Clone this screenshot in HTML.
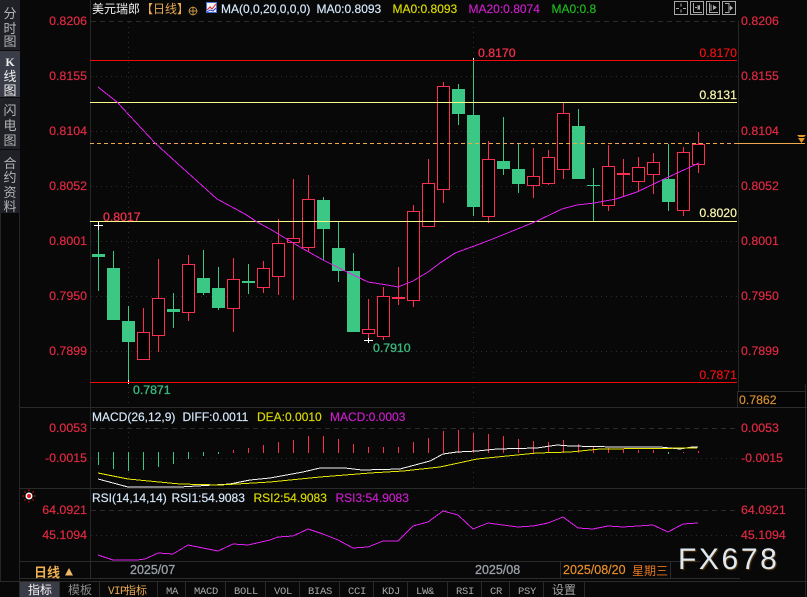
<!DOCTYPE html>
<html><head><meta charset="utf-8"><style>
html,body{margin:0;padding:0;background:#080808;width:807px;height:597px;overflow:hidden}
svg{position:absolute;left:0;top:0}
text{font-family:"Liberation Sans","Noto Sans CJK SC",sans-serif;font-size:12px;white-space:pre;stroke-width:.18px}
.a{fill:#e02a42;stroke:#e02a42;font-size:12.4px}
.t{font-size:12.3px}
.w{fill:#d4e6f8;stroke:#d4e6f8}
.yl{fill:#d8d800;stroke:#d8d800}
.mg{fill:#c81ec8;stroke:#c81ec8}
.gr{fill:#1fb81f;stroke:#1fb81f}
.c{font-size:13px;fill:#b4b4b4;text-anchor:middle}
.k{font-size:13px;fill:#f0f0f0;text-anchor:middle}
.m{font-family:"Liberation Mono",monospace;font-size:10.5px;fill:#a8a8a8;letter-spacing:-.3px}
#fx{position:absolute;left:678px;top:543px;font:30px/34px "Liberation Sans",sans-serif;letter-spacing:2.6px;color:#dfe9f2;text-shadow:1px 1px 1px #5a3a10}
</style></head><body>
<svg width="807" height="597" viewBox="0 0 807 597" xmlns="http://www.w3.org/2000/svg">
<rect width="807" height="597" fill="#080808"/>
<!-- sidebar -->
<rect x="0" y="0" width="20" height="213" fill="#1f2127"/>
<rect x="0" y="51" width="20" height="46" fill="#3a3c48"/>
<g shape-rendering="crispEdges" stroke="#2c2c2c" fill="none">
<path d="M0.5 213V581M19.5 213V581M90.5 0V561M738.5 21V407" stroke="#262626"/>
<path d="M0 50.5H20M0 97.5H20M0 149.5H20" stroke="#0c0c0c"/>
<path d="M20 407.5H807M20 488.5H807M20 561.5H700M20 578.5H740M0 581.5H807" stroke="#2a2a2a"/>
<path d="M805.5 384V597" stroke="#262626"/>
</g>
<text class="c" x="10" y="18">分</text><text class="c" x="10" y="33">时</text><text class="c" x="10" y="46">图</text>
<text x="10" y="66" text-anchor="middle" style="font-family:'Liberation Serif',serif;font-size:12px;font-weight:bold;fill:#eee">K</text><text class="k" x="10" y="81">线</text><text class="k" x="10" y="95">图</text>
<text class="c" x="10" y="115">闪</text><text class="c" x="10" y="130">电</text><text class="c" x="10" y="145">图</text>
<text class="c" x="10" y="168">合</text><text class="c" x="10" y="182">约</text><text class="c" x="10" y="197">资</text><text class="c" x="10" y="211">料</text>
<!-- grid -->
<g fill="none" shape-rendering="crispEdges" stroke-width="1">
<path d="M91 21.5H737" stroke="#2c2c2c" stroke-dasharray="5 4"/>
<path d="M91 76.5H737M91 131.5H737M91 186.5H737M91 241.5H737M91 296.5H737M91 351.5H737M91 458.5H737M91 535.5H737" stroke="#2c2c2c" stroke-dasharray="1 4"/>
<path d="M91 428.5H737M91 510.5H737" stroke="#2c2c2c" stroke-dasharray="5 4"/>
<path d="M128.5 22V488M473.5 22V488M738.5 21V407" stroke="#2c2c2c" stroke-dasharray="1 4"/>
</g>
<!-- wicks -->
<g fill="none" shape-rendering="crispEdges">
<path stroke="#3ac884" d="M98.5 224V291M113.5 251V268M128.5 306V382M173.5 293V328M203.5 250V295M218.5 267V310M248.5 264V294M323.5 197V260M338.5 222V282M353.5 253V271M458.5 84V125M473.5 59V216M503.5 117V175M518.5 144V193M578.5 109V126M593.5 168V221M668.5 144V211"/>
<path stroke="#3ac884" d="M587 185.5H600"/>
<path stroke="#fb3050" d="M143.5 308V360M158.5 259V352M188.5 255V321M233.5 258V332M263.5 261V293M278.5 219V295M293.5 179V300M308.5 175V252M368.5 299V340M383.5 287V340M398.5 267V305M413.5 205V307M428.5 159V227M443.5 82V203M488.5 141V223M533.5 148V198M548.5 150V185M563.5 103V179M608.5 145V211M623.5 159V196M638.5 157V192M653.5 153V194M683.5 147V216M698.5 132V173"/>
<!-- green bodies -->
<path fill="#3ac884" d="M92 254h13v3h-13zM107 268h13v52h-13zM122 321h13v21h-13zM167 309h13v3h-13zM197 278h13v15h-13zM212 288h13v20h-13zM242 281h13v2h-13zM317 200h13v29h-13zM332 248h13v23h-13zM347 271h13v61h-13zM452 89h13v25h-13zM467 115h13v92h-13zM497 161h13v8h-13zM512 169h13v15h-13zM572 126h13v53h-13zM662 179h13v23h-13z"/>
<!-- red bodies -->
<path fill="#000" stroke="#fb3050" d="M137.5 332.5h12v27h-12zM152.5 298.5h12v37h-12zM182.5 264.5h12v48h-12zM227.5 279.5h12v29h-12zM257.5 268.5h12v19h-12zM272.5 243.5h12v33h-12zM287.5 238.5h12v4h-12zM302.5 199.5h12v48h-12zM362.5 329.5h12v4h-12zM377.5 296.5h12v40h-12zM407.5 211.5h12v89h-12zM422.5 183.5h12v43h-12zM437.5 86.5h12v103h-12zM482.5 159.5h12v57h-12zM527.5 176.5h12v9h-12zM542.5 157.5h12v26h-12zM557.5 113.5h12v56h-12zM602.5 166.5h12v39h-12zM632.5 167.5h12v14h-12zM647.5 162.5h12v12h-12zM677.5 152.5h12v58h-12zM692.5 144.5h12v20h-12z"/>
<path fill="#fb3050" d="M392 297h13v2h-13zM617 173h13v2h-13z"/>
<!-- crosshair marks -->
<path stroke="#fff" d="M94 225.5H103M98.5 221V230M128.5 380V384M364 340.5H373M368.5 338V343M473.5 58V61"/>
<!-- level lines -->
<path stroke="#f00a0a" d="M90 60.5H737M90 382.5H737"/>
<path stroke="#fbfb8c" d="M90 102.5H737M90 221.5H737"/>
<path stroke="#f0a850" stroke-dasharray="4 3" d="M90 143.5H737"/>
<path stroke="#f0a850" d="M737 143.5H805"/>
<!-- macd hist -->
<path stroke="#3ac884" d="M98.5 452V465M113.5 452V469M128.5 452V471M143.5 452V470M158.5 452V467M173.5 452V464M188.5 452V459M203.5 452V456M218.5 452V454M668.5 452V454"/>
<path stroke="#fb3050" d="M233.5 450V453M248.5 448V453M263.5 445V453M278.5 442V453M293.5 440V453M308.5 436V453M323.5 436V453M338.5 439V453M353.5 444V453M368.5 447V453M383.5 447V453M398.5 447V453M413.5 442V453M428.5 438V453M443.5 431V453M458.5 430V453M473.5 433V453M488.5 434V453M503.5 436V453M518.5 439V453M533.5 441V453M548.5 442V453M563.5 440V453M578.5 444V453M593.5 447V453M608.5 448V453M623.5 449V453M638.5 450V453M653.5 450V453M683.5 452V453M698.5 451V453"/>
</g>
<g fill="none" shape-rendering="crispEdges">
<!-- MA line -->
<polyline stroke="#e020f0" points="98,87 117,102 155,143 177,163 197,181 217,199 245,214 257,222 270,229 300,247 323,260 345,271 368,282 387,285 398,287 413,281 428,272 440,263 455,253 477,245 490,240 510,232 537,221 562,209 577,205 594,203 616,199 637,192 662,180 699,163"/>
<!-- DIFF / DEA -->
<polyline stroke="#f4f4f4" points="98,479 113,483 128,487 180,487 230,484 250,480 270,478 303,472 320,468 345,468 362,470 400,469 430,461 443,454 457,452 477,451 497,449 537,448 557,445 570,446 616,447 660,447 680,449 692,447 698,447"/>
<polyline stroke="#e6e600" points="98,473 128,479 180,484 220,485 270,482 320,477 370,473 403,471 440,467 477,459 537,453 570,452 600,449 697,448"/>
<!-- RSI -->
<polyline stroke="#e020f0" points="98,555 113,560 137,560 145,559 158,553 173,554 188,545 203,548 218,551 233,544 248,545 270,540 278,537 293,536 308,529 323,534 338,540 353,548 368,547 383,541 398,541 413,526 428,522 443,511 458,515 473,529 488,523 503,525 518,527 533,526 548,523 563,517 578,528 593,529 608,526 623,527 638,526 653,525 668,532 683,524 698,523"/>
</g>
<!-- orange arrows -->
<path fill="#e89a20" d="M797 135h9l-2 2h-5zM798 138h7l-3.500 5z"/>
<!-- axis -->
<g text-anchor="end">
<text class="a" x="87" y="25">0.8206</text><text class="a" x="87" y="80">0.8155</text><text class="a" x="87" y="135">0.8104</text><text class="a" x="87" y="190">0.8052</text><text class="a" x="87" y="245">0.8001</text><text class="a" x="87" y="300">0.7950</text><text class="a" x="87" y="355">0.7899</text>
<text class="a" x="87" y="432">0.0053</text><text class="a" x="87" y="462">-0.0015</text>
<text class="a" x="87" y="514">64.0921</text><text class="a" x="87" y="539">45.1094</text>
</g>
<g>
<text class="a" x="741" y="25">0.8206</text><text class="a" x="741" y="80">0.8155</text><text class="a" x="741" y="135">0.8104</text><text class="a" x="741" y="190">0.8052</text><text class="a" x="741" y="245">0.8001</text><text class="a" x="741" y="300">0.7950</text><text class="a" x="741" y="355">0.7899</text>
<text class="a" x="741" y="432">0.0053</text><text class="a" x="741" y="462">-0.0015</text>
<text class="a" x="741" y="514">64.0921</text><text class="a" x="741" y="539">45.1094</text>
</g>
<!-- price box -->
<rect x="737.500" y="391.500" width="68" height="16" fill="#050505" stroke="#2c2c2c" shape-rendering="crispEdges"/>
<text class="t" x="739" y="404" fill="#d89030" stroke="#d89030">0.7862</text>
<!-- value labels -->
<text class="t" x="478" y="57" fill="#e83048" stroke="#e83048" style="stroke-width:.35px">0.8170</text>
<text class="t" x="737" y="57" text-anchor="end" fill="#f01010" stroke="#f01010">0.8170</text>
<text class="t" x="737" y="99" text-anchor="end" fill="#fcfcb0" stroke="#fcfcb0">0.8131</text>
<text class="t" x="737" y="217" text-anchor="end" fill="#fcfcb0" stroke="#fcfcb0">0.8020</text>
<text class="t" x="737" y="379" text-anchor="end" fill="#f01010" stroke="#f01010">0.7871</text>
<text class="t" x="103" y="221" fill="#e83048" stroke="#e83048" style="stroke-width:.35px">0.8017</text>
<text class="t" x="133" y="394" fill="#3ab87c" stroke="#3ab87c" style="stroke-width:.35px">0.7871</text>
<text class="t" x="373" y="352" fill="#3ab87c" stroke="#3ab87c" style="stroke-width:.35px">0.7910</text>
<!-- header -->
<text x="92" y="13" fill="#f0f0f0">美元瑞郎</text>
<text x="141" y="13" fill="#e8a850">【日线】</text>
<circle cx="193" cy="11" r="3.800" fill="none" stroke="#c09040"/><path d="M188.500 11H197.500M193 6.500V15.500" stroke="#c09040" fill="none"/>
<rect x="206.500" y="2.500" width="10" height="10" fill="#f4f4f4" stroke="#4a70c8"/><path d="M207 10l3-3 2 2 4-5" fill="none" stroke="#e02020"/><path d="M207 12l3-2 3 1 3-3" fill="none" stroke="#2040e0"/>
<text class="w" x="221" y="13">MA(0,0,20,0,0,0)</text>
<text class="w" x="316.500" y="13">MA0:0.8093</text>
<text class="yl" x="392.500" y="13">MA0:0.8093</text>
<text class="mg" x="468.500" y="13">MA20:0.8074</text>
<text class="gr" x="551.500" y="13">MA0:0.8</text>
<!-- toolbar icons -->
<g fill="none" stroke="#a8a8a8" shape-rendering="crispEdges">
<rect x="674.500" y="1.500" width="13" height="13"/><rect x="690.500" y="1.500" width="13" height="13"/><rect x="706.500" y="1.500" width="13" height="13"/><rect x="722.500" y="1.500" width="13" height="13"/>
<path d="M681 3.500V6.500M681 9.500V12.500M676 8.500H679M683 8.500H686M693.500 3V12.500H702M698 5V10M695 7.500H697M709.500 3V12.500H718M711 4.500V11M725 3.500H729V12.500H725M729 8H733"/>
<path fill="#a8a8a8" d="M700 5v5l-3-2.500zM713 5v5l4-2.500zM730 5.500v5l3-2.500z" stroke="none"/>
</g>
<!-- MACD header -->
<text class="w" x="92" y="421">MACD(26,12,9)</text>
<text class="w" x="182.500" y="421">DIFF:0.0011</text>
<text class="yl" x="257" y="421">DEA:0.0010</text>
<text class="mg" x="330" y="421">MACD:0.0003</text>
<!-- RSI header -->
<text class="w" x="92" y="502">RSI(14,14,14)</text>
<text class="w" x="171.500" y="502">RSI1:54.9083</text>
<text class="yl" x="253.500" y="502">RSI2:54.9083</text>
<text class="mg" x="335.500" y="502">RSI3:54.9083</text>
<!-- red dot -->
<circle cx="29" cy="496" r="3.500" fill="#fff"/><circle cx="29" cy="496" r="2" fill="#f01010"/>
<path d="M29 489.500V491M29 501V502.500M22.500 496H24M34 496H35.500M24.500 491.500l1 1M33.500 491.500l-1 1M24.500 500.500l1-1M33.500 500.500l-1-1" stroke="#f01010" fill="none"/>
<!-- bottom row -->
<text x="34" y="577" fill="#f0b050" style="font-size:13px;font-weight:bold">日线</text>
<path d="M65 575.500L69 568L73 575.500z" fill="#f0b868"/>
<path d="M90.500 561V579" stroke="#2a2a2a" shape-rendering="crispEdges"/>
<text x="130" y="574" fill="#9aa0a8" stroke="#9aa0a8" style="font-size:12.500px;stroke-width:.3px">2025/07</text>
<text x="475" y="574" fill="#9aa0a8" stroke="#9aa0a8" style="font-size:12.500px;stroke-width:.3px">2025/08</text>
<rect x="560.500" y="561.500" width="110" height="17" fill="#080808" stroke="#2a2a2a" shape-rendering="crispEdges"/>
<text x="563" y="574" fill="#e89028" stroke="#e89028" style="font-size:12.500px">2025/08/20</text>
<text x="632" y="575" fill="#e87820">星期三</text>
<!-- tabs -->
<rect x="20" y="582" width="39" height="15" fill="#3a3c48"/>
<g stroke="#2a2a2a" shape-rendering="crispEdges"><path d="M19.500 582V597M59.500 582V597M99.500 582V597M157.500 582V597M185.500 582V597M225.500 582V597M265.500 582V597M299.500 582V597M339.500 582V597M373.500 582V597M407.500 582V597M447.500 582V597M481.500 582V597M509.500 582V597M543.500 582V597M584.500 582V597"/></g>
<text x="28" y="594" fill="#f4f4f4">指标</text>
<text x="68" y="594" fill="#8a8a8a">模板</text>
<text x="108" y="594" fill="#e8a850" style="font-family:'Liberation Mono','Noto Sans CJK SC',monospace;font-size:11px"><tspan letter-spacing="-.6">VIP</tspan><tspan x="125">指标</tspan></text>
<text class="m" x="166" y="594">MA</text>
<text class="m" x="194" y="594">MACD</text>
<text class="m" x="234" y="594">BOLL</text>
<text class="m" x="274" y="594">VOL</text>
<text class="m" x="308" y="594">BIAS</text>
<text class="m" x="348" y="594">CCI</text>
<text class="m" x="382" y="594">KDJ</text>
<text class="m" x="416" y="594">LW&amp;</text>
<text class="m" x="456" y="594">RSI</text>
<text class="m" x="490" y="594">CR</text>
<text class="m" x="518" y="594">PSY</text>
<text x="552" y="594" fill="#a0a0a0">设置</text>
</svg>
<div id="fx">FX678</div>
</body></html>
